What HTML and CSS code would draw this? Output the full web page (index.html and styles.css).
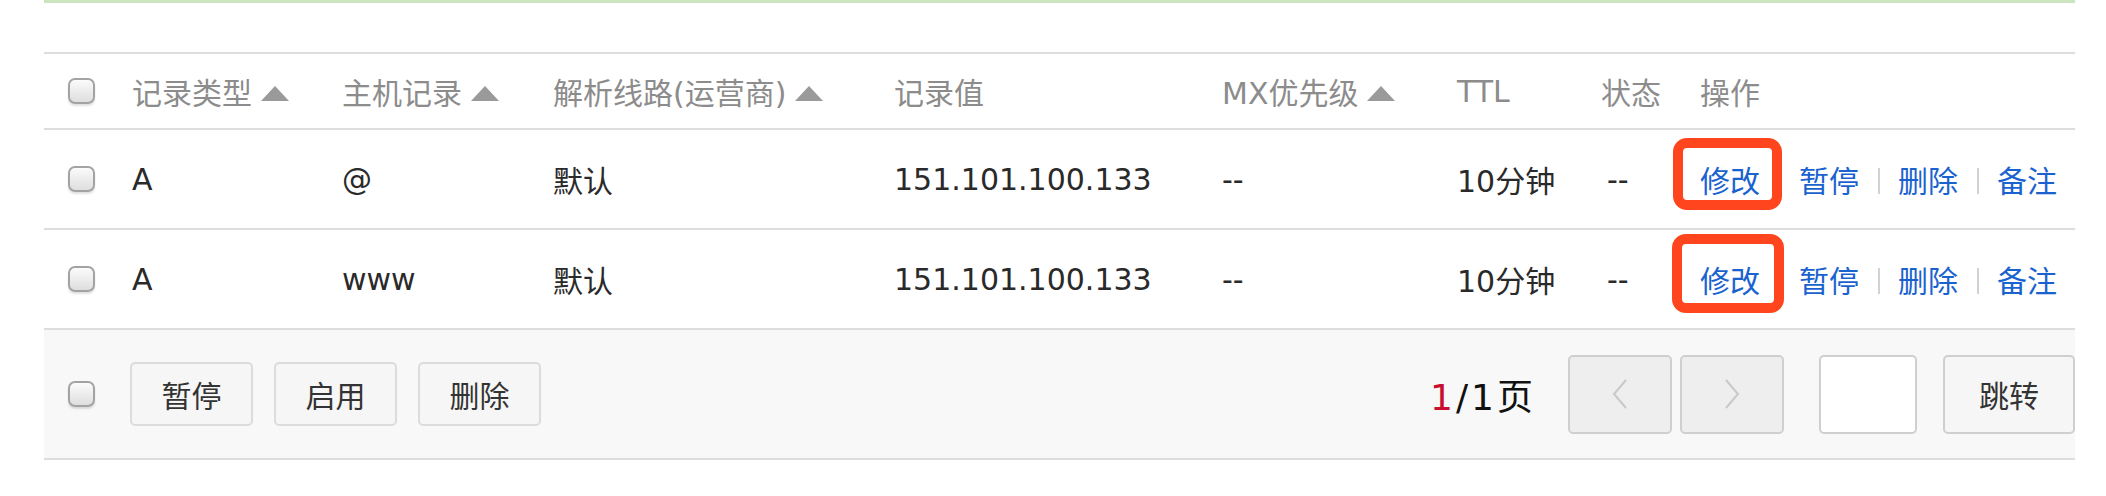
FILE: index.html
```html
<!DOCTYPE html>
<html lang="zh-CN">
<head>
<meta charset="utf-8">
<title>解析记录</title>
<link rel="stylesheet" href="styles.css">
</head>
<body>
<div class="page">
  <div class="topline"></div>
  <div class="records">
    <div class="row head">
      <div class="cell c0"><input type="checkbox" class="cb"></div>
      <div class="cell">记录类型<i class="tri"></i></div>
      <div class="cell">主机记录<i class="tri"></i></div>
      <div class="cell">解析线路(运营商)<i class="tri"></i></div>
      <div class="cell">记录值</div>
      <div class="cell">MX优先级<i class="tri"></i></div>
      <div class="cell">TTL</div>
      <div class="cell">状态</div>
      <div class="cell">操作</div>
    </div>
    <div class="row data">
      <div class="cell c0"><input type="checkbox" class="cb"></div>
      <div class="cell">A</div>
      <div class="cell">@</div>
      <div class="cell">默认</div>
      <div class="cell">151.101.100.133</div>
      <div class="cell">--</div>
      <div class="cell">10分钟</div>
      <div class="cell dash">--</div>
      <div class="cell ops">
        <a class="lk">修改</a><span class="sep"></span><a class="lk">暂停</a><span class="sep"></span><a class="lk">删除</a><span class="sep"></span><a class="lk">备注</a>
        <span class="hl hl1"></span>
      </div>
    </div>
    <div class="row data">
      <div class="cell c0"><input type="checkbox" class="cb"></div>
      <div class="cell">A</div>
      <div class="cell">www</div>
      <div class="cell">默认</div>
      <div class="cell">151.101.100.133</div>
      <div class="cell">--</div>
      <div class="cell">10分钟</div>
      <div class="cell dash">--</div>
      <div class="cell ops">
        <a class="lk">修改</a><span class="sep"></span><a class="lk">暂停</a><span class="sep"></span><a class="lk">删除</a><span class="sep"></span><a class="lk">备注</a>
        <span class="hl hl2"></span>
      </div>
    </div>
  </div>
  <div class="footer">
    <input type="checkbox" class="cb">
    <div class="actions">
      <button class="btn">暂停</button>
      <button class="btn">启用</button>
      <button class="btn">删除</button>
    </div>
    <div class="pager">
      <span class="count"><span class="cur">1</span>/1页</span>
      <button class="pg prev"><svg width="16" height="30" viewBox="0 0 16 30"><polyline points="14,1 2,15 14,29" fill="none" stroke="#c9c9c9" stroke-width="2"/></svg></button>
      <button class="pg next"><svg width="16" height="30" viewBox="0 0 16 30"><polyline points="2,1 14,15 2,29" fill="none" stroke="#c9c9c9" stroke-width="2"/></svg></button>
      <input class="jump" type="text">
      <button class="go">跳转</button>
    </div>
  </div>
</div>
</body>
</html>
```
FILE: styles.css
```css
html, body {
  margin: 0;
  padding: 0;
  background: #fff;
}
body {
  font-family: "DejaVu Sans", "Noto Sans CJK SC", sans-serif;
  font-size: 30px;
  color: #333;
}
.page {
  margin-left: 44px;
  width: 2031px;
}
.topline {
  height: 3px;
  background: #cce4bf;
}
.records {
  margin-top: 49px;
}
.row {
  display: grid;
  grid-template-columns: 88px 210px 211px 341px 328px 235px 144px 99px 1fr;
  border-bottom: 2px solid #dddddd;
}
.row.head {
  border-top: 2px solid #dddddd;
  height: 74px;
  color: #8c8c8c;
}
.row.data {
  height: 98px;
  color: #2a2a2a;
}
.cell {
  display: flex;
  align-items: center;
  white-space: nowrap;
}
.c0 {
  padding-left: 24px;
}
.dash {
  padding-left: 6px;
}
.cb {
  appearance: none;
  -webkit-appearance: none;
  margin: 0;
  width: 27px;
  height: 26px;
  box-sizing: border-box;
  border: 2px solid #a3a3a3;
  border-radius: 7px;
  background: linear-gradient(#fbfbfb, #dedede);
  box-shadow: 0 2px 2px rgba(0, 0, 0, 0.12);
}
.tri {
  display: inline-block;
  width: 0;
  height: 0;
  border-left: 14px solid transparent;
  border-right: 14px solid transparent;
  border-bottom: 15px solid #9a9a9a;
  margin-left: 9px;
  margin-top: 4px;
}
.ops {
  position: relative;
}
.lk {
  color: #1a63cf;
  text-decoration: none;
}
.sep {
  display: inline-block;
  width: 2px;
  height: 26px;
  background: #d2d2d2;
  margin: 4px 18px 0 19px;
}
.hl {
  position: absolute;
  box-sizing: border-box;
  border: 10px solid #ff451d;
  border-radius: 14px;
}
.hl1 {
  left: -27px;
  top: 8px;
  width: 109px;
  height: 72px;
}
.hl2 {
  left: -28px;
  top: 4px;
  width: 112px;
  height: 79px;
}
.footer {
  display: flex;
  align-items: center;
  height: 128px;
  background: #f8f8f8;
  border-bottom: 2px solid #dddddd;
  padding-left: 24px;
}
.actions {
  display: flex;
  gap: 21px;
  margin-left: 35px;
}
.btn, .go {
  font-family: "DejaVu Sans", "Noto Sans CJK SC", sans-serif;
  font-size: 30px;
  color: #333;
  background: #f6f6f6;
  border: 2px solid #dcdcdc;
  border-radius: 5px;
  width: 123px;
  height: 64px;
  padding: 0;
}
.pager {
  margin-left: auto;
  display: flex;
  align-items: center;
}
.count {
  font-size: 36px;
  color: #111;
  letter-spacing: 3px;
  margin-right: 32px;
}
.cur {
  color: #c8102e;
}
.pg {
  width: 104px;
  height: 79px;
  background: #eeeeee;
  border: 2px solid #cfcfcf;
  border-radius: 5px;
  padding: 0;
  display: flex;
  align-items: center;
  justify-content: center;
}
.next {
  margin-left: 8px;
}
.jump {
  width: 98px;
  height: 79px;
  box-sizing: border-box;
  margin: 0 0 0 35px;
  background: #fff;
  border: 2px solid #cfcfcf;
  border-radius: 5px;
}
.go {
  margin-left: 26px;
  width: 132px;
  height: 79px;
  border-color: #cfcfcf;
}
```
